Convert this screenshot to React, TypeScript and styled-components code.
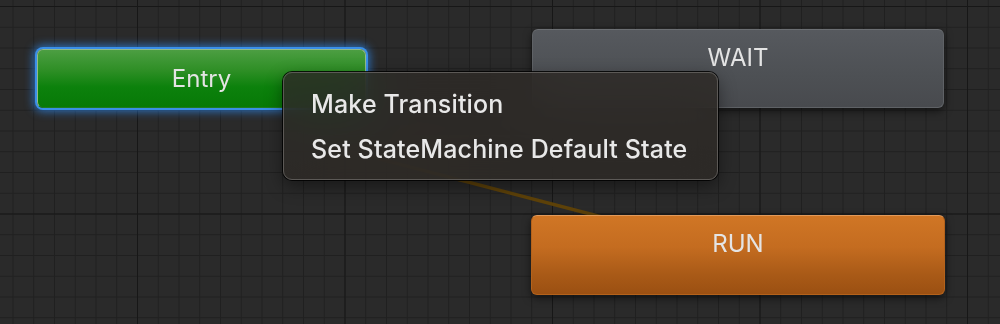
import React from 'react';
import styled, { createGlobalStyle, css } from 'styled-components';

const GlobalStyles = createGlobalStyle`
  html, body {
    margin: 0;
    padding: 0;
    background: #292929;
  }
  body {
    font-family: 'Inter', 'Helvetica Neue', Arial, sans-serif;
    -webkit-font-smoothing: antialiased;
  }
`;

const Canvas = styled.div`
  position: relative;
  width: 1000px;
  height: 324px;
  overflow: hidden;
  background-color: #2a2a2a;
  background-image:
    linear-gradient(to right, #171717 1px, transparent 1px),
    linear-gradient(to bottom, #171717 1px, transparent 1px),
    linear-gradient(to right, #202020 1px, transparent 1px),
    linear-gradient(to bottom, #202020 1px, transparent 1px);
  background-size:
    207.5px 207.5px,
    207.5px 207.5px,
    20.75px 20.75px,
    20.75px 20.75px;
  background-position:
    137px 6px,
    137px 6px,
    12.5px 6px,
    12.5px 6px;
`;

const Wires = styled.svg`
  position: absolute;
  left: 0;
  top: 0;
  width: 1000px;
  height: 324px;
`;

type Kind = 'entry' | 'idle' | 'default';

const kinds = {
  entry: css`
    background: linear-gradient(to bottom, #4c9e42 0%, #2f8f26 35%, #0c810c 65%, #077907 100%);
    border: 1px solid #92ba89;
    border-bottom-color: #1f7a1f;
    box-shadow:
      0 0 0 2px #3a8fe8,
      0 0 9px 4px rgba(46, 134, 232, 0.7);
  `,
  idle: css`
    background: linear-gradient(to bottom, #56595e 0%, #4d5054 60%, #484a4e 100%);
    border: 1px solid #5f6266;
    border-top-color: #6c6f73;
    box-shadow: 0 3px 8px rgba(0, 0, 0, 0.55);
  `,
  default: css`
    background: linear-gradient(to bottom, #d07625 0%, #c46c20 40%, #a95a17 75%, #9b5012 100%);
    border: 1px solid #b4621b;
    border-top-color: #e29a5a;
    box-shadow: 0 3px 8px rgba(0, 0, 0, 0.55);
  `,
};

const StateNode = styled.div<{ $x: number; $y: number; $w: number; $h: number; $kind: Kind }>`
  position: absolute;
  left: ${p => p.$x}px;
  top: ${p => p.$y}px;
  width: ${p => p.$w}px;
  height: ${p => p.$h}px;
  box-sizing: border-box;
  border-radius: 6px;
  display: flex;
  justify-content: center;
  align-items: flex-start;
  padding-top: ${p => (p.$kind === 'entry' ? 13 : 12)}px;
  color: #e4e4e4;
  font-size: 24px;
  font-weight: 400;
  line-height: 32px;
  ${p => kinds[p.$kind]}
`;

const ContextMenu = styled.div`
  position: absolute;
  left: 283px;
  top: 72px;
  width: 435px;
  height: 108px;
  box-sizing: border-box;
  padding: 9px 0;
  border-radius: 9px;
  border: 1px solid #5c5956;
  background: rgba(45, 42, 38, 0.86);
  backdrop-filter: blur(24px) saturate(1.4);
  box-shadow:
    0 0 0 1px rgba(0, 0, 0, 0.85),
    0 6px 18px rgba(0, 0, 0, 0.45);
  display: flex;
  flex-direction: column;
`;

const MenuItem = styled.div`
  height: 45px;
  line-height: 45px;
  padding-left: 27px;
  color: #e8e8e8;
  font-size: 25px;
  letter-spacing: 0.15px;
  font-weight: 500;
  white-space: nowrap;
`;

export default function App() {
  return (
    <>
      <GlobalStyles />
      <Canvas>
        <Wires viewBox="0 0 1000 324">
          <line x1="330" y1="146" x2="640" y2="227" stroke="#5e4209" strokeWidth="3.5" strokeLinecap="round" />
        </Wires>
        <StateNode $kind="entry" $x={37} $y={49} $w={329} $h={59}>
          Entry
        </StateNode>
        <StateNode $kind="idle" $x={532} $y={29} $w={412} $h={79}>
          WAIT
        </StateNode>
        <StateNode $kind="default" $x={531} $y={215} $w={414} $h={80}>
          RUN
        </StateNode>
        <ContextMenu>
          <MenuItem>Make Transition</MenuItem>
          <MenuItem>Set StateMachine Default State</MenuItem>
        </ContextMenu>
      </Canvas>
    </>
  );
}
